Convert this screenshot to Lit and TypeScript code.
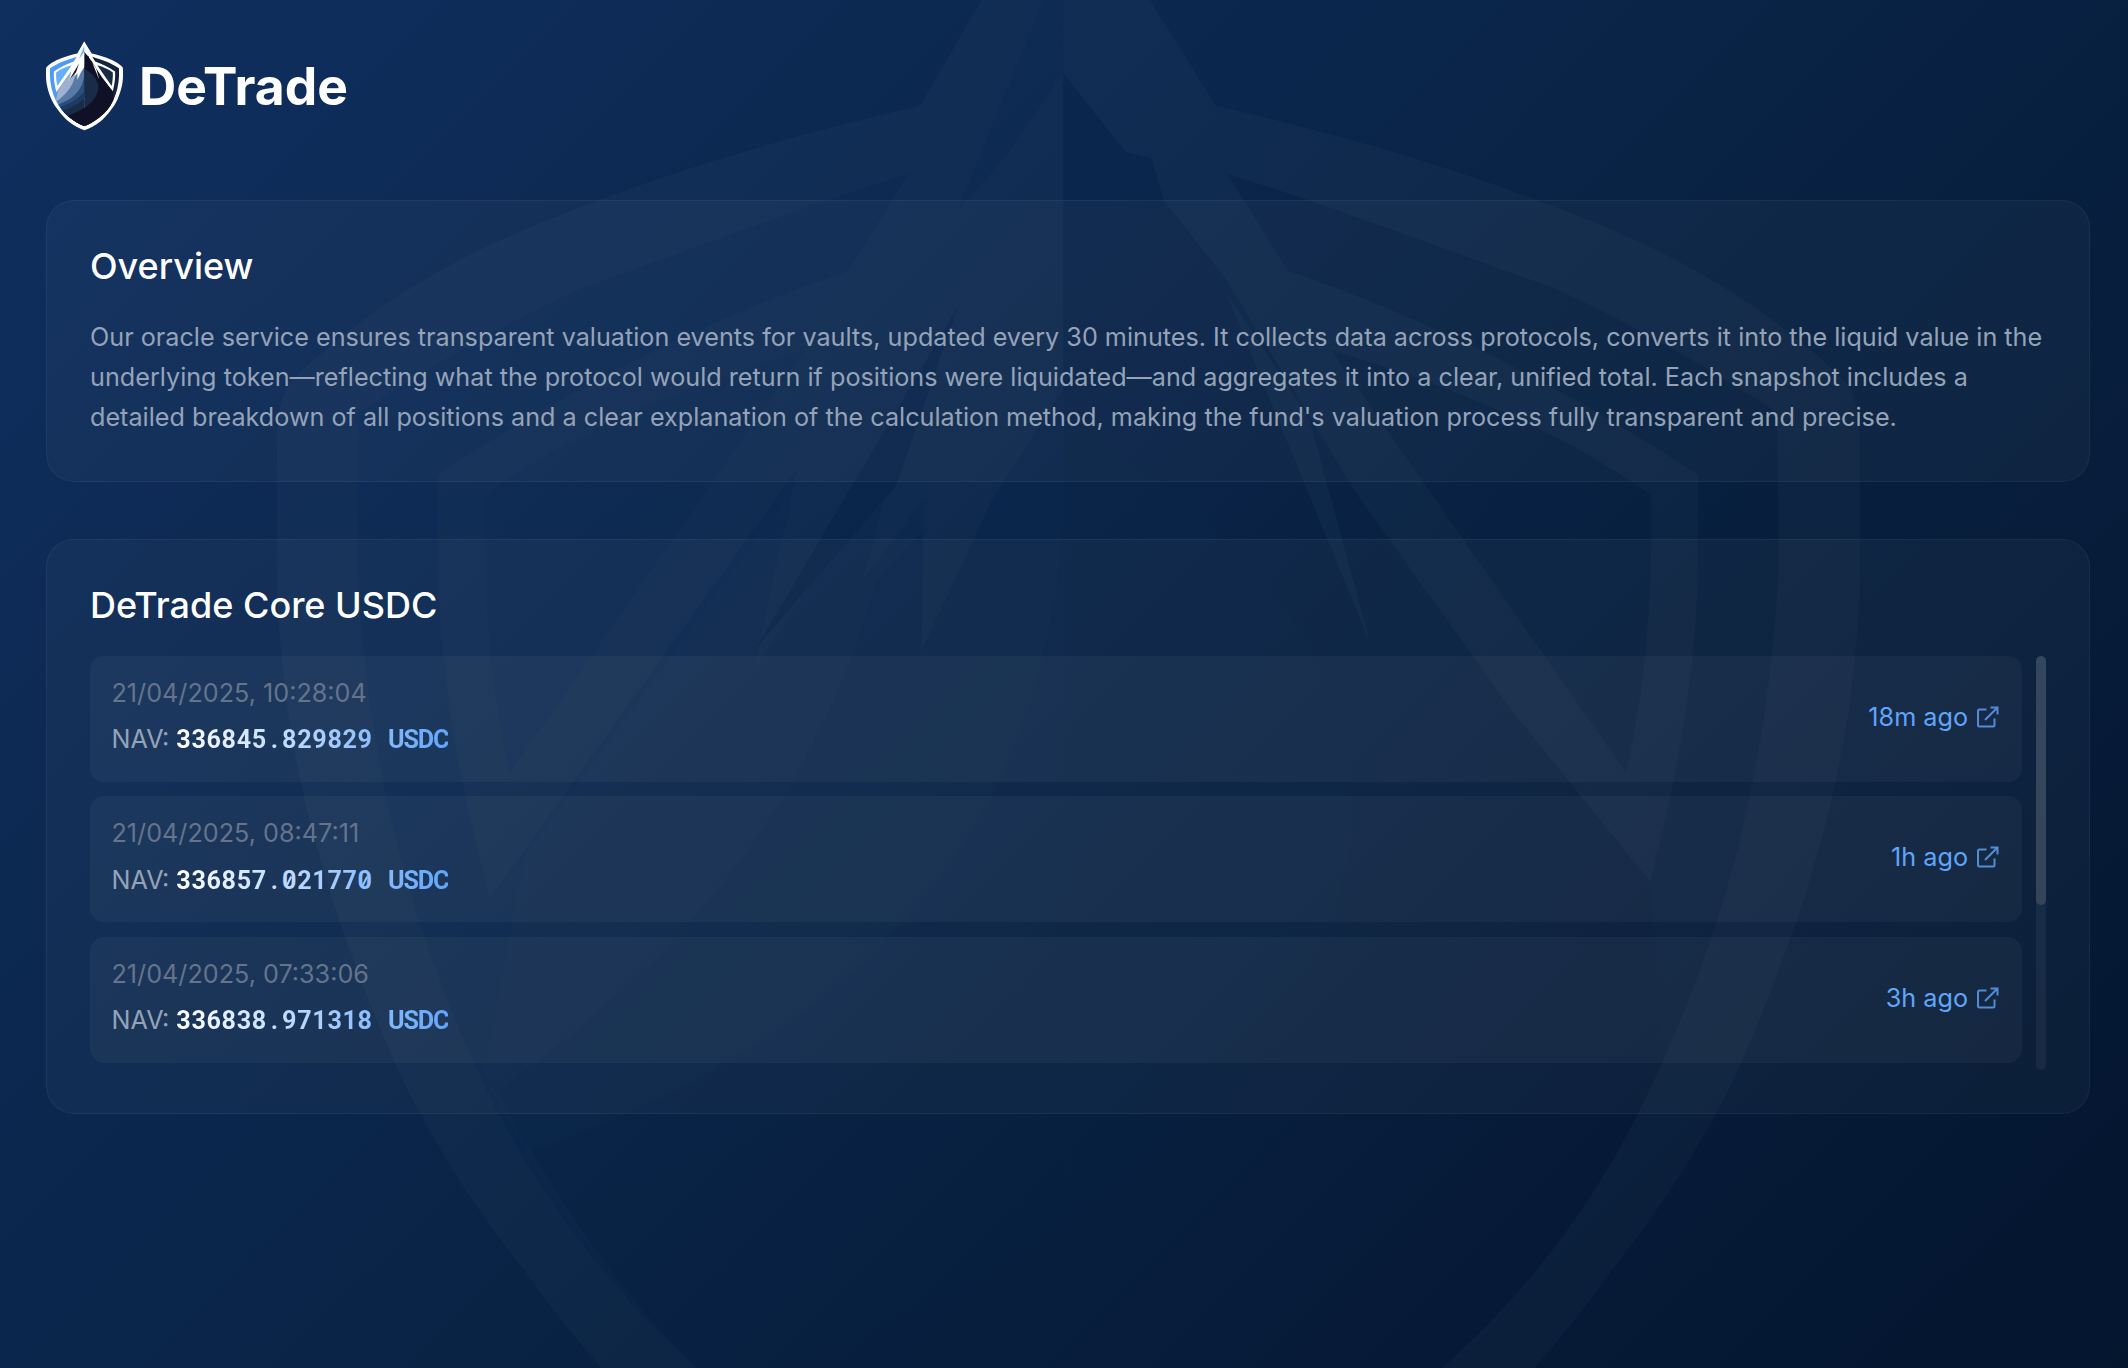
import { LitElement, html, css, svg } from "lit";
import { customElement, property } from "lit/decorators.js";

/* Shield-and-peak emblem, drawn in one coordinate space and reused for the logo and the backdrop. */
const emblem = svg`
  <path fill="#fff" d="M1063 -140 L1216 106 C1330 132 1480 172 1633 239 C1710 274 1790 325 1848 385
    C1858 400 1860 430 1860 446 L1860 580 C1855 740 1820 880 1741 1063 C1698 1155 1655 1215 1608 1275
    C1540 1370 1470 1440 1400 1500 C1290 1585 1170 1650 1068 1685 C966 1650 846 1585 736 1500
    C666 1440 596 1370 528 1275 C481 1215 438 1155 395 1063
    C316 880 281 740 277 580 L277 446 C277 430 279 400 288 385 C346 325 426 274 503 239
    C656 172 806 132 920 106 Z"/>
  <path fill="#4f9bf0" d="M1068 140 L909 174 C820 200 690 250 582 288 C500 325 425 370 359 412
    L357 558 C365 740 400 900 474 1063 C540 1210 640 1330 760 1420 C870 1505 970 1560 1068 1600 Z"/>
  <path fill="#14243c" d="M1068 140 L1227 174 C1316 200 1446 250 1554 288 C1636 325 1711 370 1777 412
    L1779 558 C1771 740 1736 900 1662 1063 C1596 1210 1496 1330 1376 1420 C1266 1505 1166 1560 1068 1600 Z"/>
  <path fill="#fff" d="M1063 -140 L1227 174 L1288 271 C1424 317 1568 388 1698 475 L1698 580
    C1693 700 1673 793 1646 898 L1176 241 Z"/>
  <path fill="#fff" d="M1063 -140 L909 174 L848 271 C712 317 568 388 438 475 L438 580
    C443 700 463 793 490 898 L960 241 Z"/>
  <path fill="#1a2c44" d="M1331 350 C1450 385 1560 430 1651 495 C1653 600 1645 690 1626 773 Z"/>
  <path fill="#64aff8" d="M805 350 C686 385 576 430 485 495 C483 600 491 690 510 773 Z"/>
  <g transform="translate(1068 -140) scale(6.87) translate(-163 -35)">
    <path fill="#182b47" d="M160 100 L198 138 L207 168 L190 230 L163 275 L150 262 Z"/>
    <path fill="#9fb1cf" d="M162.3 58 L122 128 L84 180 L78 212 C88 232 101 248 118 262 C134 275 150 284 163 288 Z"/>
    <path fill="#587aa5" d="M162.3 110 L135 140 C126 172 108 194 80 214 C90 234 103 250 118 262 C134 275 150 284 163 288 Z"/>
    <path fill="#2a4d79" d="M162.3 120 C164 176 132 206 85 223 C94 238 104 251 118 262 C134 275 150 284 163 288 Z"/>
    <path fill="#1d3b60" d="M162.3 110 L178 134 C182 178 146 214 90 231 C98 244 107 253 118 262 C134 275 150 284 163 288 Z"/>
    <path fill="#182b47" d="M162.3 100 L186 130 C200 176 164 222 98 242 C104 250 110 256 118 262 C134 275 150 284 163 288 Z"/>
    <path fill="#101126" d="M162.3 66 L186 96 L214 142 L248 184 L249.5 210 C240 232 226 249 208 262
      C192 275 176 284 163 288 C145 281 127 271 113 257 C166 240 210 206 204 164 C198 140 178 126 162.3 116 Z"/>
    <path fill="#fff" d="M162.3 36 L140 84 L126 112 L117.4 152.6 L138 122 L133 140 L142 128 L141.7 150 L152 128 L162.3 112 Z"/>
    <path fill="#6fb2f5" d="M162.3 48 L147 86 L154 78 L162.3 66 Z"/>
    <path fill="#101126" d="M147 100 L117.4 150 L138 126 Z"/>
    <path fill="#fff" d="M186 98 L207 149 L198 116 Z"/>
  </g>`;

@customElement("app-logo")
export class AppLogo extends LitElement {
  static styles = css`
    :host { display: flex; align-items: center; gap: 15.5px; height: 90px; }
    .mark { width: 77.5px; height: 90px; flex: none; }
    .name { padding-top: 1.5px; font-size: 51.6px; font-weight: 700; color: #fff; line-height: 1; }
  `;
  render() {
    return html`
      <svg class="mark" viewBox="277 -150 1593 1850" preserveAspectRatio="xMinYMid meet">${emblem}</svg>
      <span class="name">DeTrade</span>`;
  }
}

@customElement("snapshot-row")
export class SnapshotRow extends LitElement {
  @property() date = "";
  @property() nav = "";
  @property() age = "";

  static styles = css`
    :host {
      display: flex; align-items: center; justify-content: space-between; box-sizing: border-box;
      height: 126px; padding: 0 22px 0 21.5px; border-radius: 14px; background: rgba(255, 255, 255, 0.04);
      font-size: 25.2px; line-height: 40.3px;
    }
    .info { display: flex; flex-direction: column; gap: 6px; padding-bottom: 4.5px; }
    .date { color: #64748b; }
    .nav { color: #94a3b8; white-space: pre; }
    .value {
      font-family: Roboto, sans-serif; font-weight: 700; letter-spacing: 0.026em;
      background: linear-gradient(90deg, #fff, #60a5fa);
      -webkit-background-clip: text; background-clip: text; color: transparent;
    }
    .dot { display: inline-block; width: 0.6em; text-align: center; letter-spacing: 0; }
    .unit { letter-spacing: -0.045em; margin-left: 0.4em; }
    .zero { position: relative; }
    .zero::after {
      content: ""; position: absolute; left: 6.2px; top: 10px; width: 2px; height: 10px;
      background: currentColor; transform: rotate(26deg);
    }
    .link { display: flex; align-items: center; gap: 7px; color: #60a5fa; padding-bottom: 4px; }
    .icon { width: 24px; height: 24px; opacity: 0.8; margin-right: 1px; }
  `;

  /* Positioned glyphs fall outside the clipped gradient, so a zero takes the gradient's colour at its place. */
  private digits(text: string, offset: number) {
    return [...text].map((c, i) => {
      if (c !== "0") return c;
      const share = Math.round((100 * (offset + i + 0.5)) / (this.nav.length + 5));
      return html`<span class="zero" style="color: color-mix(in srgb, #60a5fa ${share}%, #fff)">0</span>`;
    });
  }

  render() {
    const [whole, fraction] = this.nav.split(".");
    return html`
      <div class="info">
        <div class="date">${this.date}</div>
        <div class="nav">NAV: <span class="value">${this.digits(whole, 0)}<span class="dot">.</span>${this.digits(fraction, whole.length + 1)}<span class="unit"> USDC</span></span></div>
      </div>
      <div class="link">
        <span>${this.age}</span>
        <svg class="icon" viewBox="0 0 24 24" fill="none" stroke="currentColor" stroke-width="2">
          <path d="M11.5 4.5H4.5A1.5 1.5 0 0 0 3 6v14A1.5 1.5 0 0 0 4.5 21.500H18a1.5 1.5 0 0 0 1.5-1.5V13.500M15.500 2.500H22.500V9.500M22.500 2.500L10 15"/>
        </svg>
      </div>`;
  }
}

@customElement("app-root")
export class AppRoot extends LitElement {
  private snapshots = [
    { date: "21/04/2025, 10:28:04", nav: "336845.829829", age: "18m ago" },
    { date: "21/04/2025, 08:47:11", nav: "336857.021770", age: "1h ago" },
    { date: "21/04/2025, 07:33:06", nav: "336838.971318", age: "3h ago" },
  ];

  static styles = css`
    :host {
      display: block; position: relative; box-sizing: border-box; height: 1368px; overflow: hidden;
      padding: 41px 38px 0 46px; font-family: Inter, sans-serif; color: #fff;
      background: linear-gradient(135deg, #0f2f5f 0%, #092345 52%, #04152e 100%);
    }
    .backdrop { position: absolute; left: 0; top: 0; width: 2128px; height: 1368px; opacity: 0.02; }
    .content { position: relative; display: flex; flex-direction: column; }
    .card {
      box-sizing: border-box; border: 1px solid rgba(255, 255, 255, 0.05); border-radius: 28px;
      background: rgba(255, 255, 255, 0.03); padding: 43px;
    }
    .overview { margin-top: 69px; height: 282px; }
    .vault { margin-top: 57px; height: 575px; }
    .title { margin: 0; font-size: 36px; font-weight: 500; line-height: 44px; }
    .text { margin: 29px 0 0; font-size: 25.2px; line-height: 40.2px; color: #94a3b8; }
    .scroller { display: flex; justify-content: space-between; height: 414px; margin-top: 29px; }
    .rows { display: flex; flex-direction: column; gap: 14.4px; width: 1932px; }
    .track { width: 10px; border-radius: 5px; background: rgba(255, 255, 255, 0.05); }
    .thumb { height: 249px; border-radius: 5px; background: rgba(255, 255, 255, 0.12); }
  `;

  render() {
    return html`
      <svg class="backdrop" viewBox="0 0 2128 1368" aria-hidden="true">${emblem}</svg>
      <div class="content">
        <app-logo></app-logo>
        <section class="card overview">
          <h2 class="title">Overview</h2>
          <p class="text">Our oracle service ensures transparent valuation events for vaults, updated every 30 minutes. It collects data across protocols, converts it into the liquid value in the underlying token—reflecting what the protocol would return if positions were liquidated—and aggregates it into a clear, unified total. Each snapshot includes a detailed breakdown of all positions and a clear explanation of the calculation method, making the fund's valuation process fully transparent and precise.</p>
        </section>
        <section class="card vault">
          <h2 class="title">DeTrade Core USDC</h2>
          <div class="scroller">
            <div class="rows">
              ${this.snapshots.map((s) => html`<snapshot-row .date=${s.date} .nav=${s.nav} .age=${s.age}></snapshot-row>`)}
            </div>
            <div class="track"><div class="thumb"></div></div>
          </div>
        </section>
      </div>`;
  }
}
